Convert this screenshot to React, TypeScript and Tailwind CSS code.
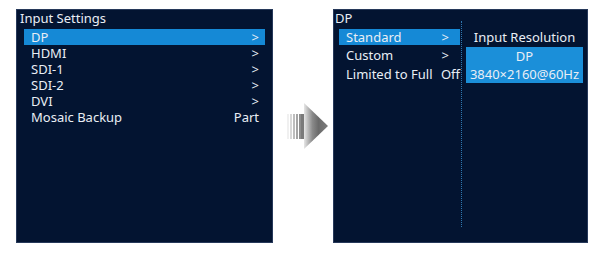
import React from "react";

const font = { fontFamily: '"Noto Sans", "Open Sans", sans-serif' };

function Arrow() {
  return (
    <svg width="42" height="46" viewBox="0 0 42 46" className="block">
      <defs>
        <linearGradient id="ag" x1="0" y1="0" x2="1" y2="0">
          <stop offset="0" stopColor="#e6e6e6" />
          <stop offset="0.35" stopColor="#8a8a8a" />
          <stop offset="0.6" stopColor="#6a6a6a" />
          <stop offset="1" stopColor="#7c7c7c" />
        </linearGradient>
      </defs>
      <rect x="0" y="11" width="2" height="25" fill="#f0f0f0" />
      <rect x="3" y="11" width="2" height="25" fill="#d8d8d8" />
      <rect x="6" y="11" width="2" height="25" fill="#bdbdbd" />
      <rect x="9" y="11" width="2" height="25" fill="#a4a4a4" />
      <rect x="12" y="11" width="2" height="25" fill="#8e8e8e" />
      <rect x="14" y="11" width="4" height="25" fill="#7a7a7a" />
      <polygon points="17,0 41,23 17,46" fill="url(#ag)" />
    </svg>
  );
}

function LeftRow({ label, value, active }: { label: string; value: string; active?: boolean }) {
  return (
    <div
      className={`mx-[7px] h-[16px] flex items-center justify-between pl-[7px] pr-[6px] text-[13px] leading-[16px] text-[#e9eef5] ${
        active ? "bg-[#1589d6]" : ""
      }`}
    >
      <span>{label}</span>
      <span>{value}</span>
    </div>
  );
}

export default function App() {
  return (
    <div className="w-[605px] h-[258px] bg-white" style={font}>
      <div className="flex items-center pt-[9px] pl-[16px]">
        {/* Left panel */}
        <div className="w-[257px] h-[234px] bg-[#031431] border border-[#27395a] flex flex-col">
          <div className="h-[19px] pl-[3px] text-[13px] leading-[17px] text-[#e9eef5]">Input Settings</div>
          <LeftRow label="DP" value=">" active />
          <LeftRow label="HDMI" value=">" />
          <LeftRow label="SDI-1" value=">" />
          <LeftRow label="SDI-2" value=">" />
          <LeftRow label="DVI" value=">" />
          <LeftRow label="Mosaic Backup" value="Part" />
        </div>

        {/* Arrow */}
        <div className="ml-[14px] mr-[4px]">
          <Arrow />
        </div>

        {/* Right panel */}
        <div className="w-[255px] h-[234px] bg-[#031431] border border-[#27395a] flex flex-col">
          <div className="h-[19px] pl-[1px] text-[13px] leading-[17px] text-[#e9eef5]">DP</div>
          <div className="flex flex-1">
            <div className="ml-[5px] w-[121px] flex flex-col text-[13px] leading-[16px] text-[#e9eef5]">
              <div className="h-[16px] flex items-center justify-between pl-[7px] pr-[11px] bg-[#1589d6]">
                <span>Standard</span>
                <span>&gt;</span>
              </div>
              <div className="h-[20px] flex items-center justify-between pl-[7px] pr-[11px]">
                <span>Custom</span>
                <span>&gt;</span>
              </div>
              <div className="h-[18px] flex items-center justify-between pl-[7px]">
                <span>Limited to Full</span>
                <span>Off</span>
              </div>
            </div>
            <div className="ml-[1px] -mt-[8px] mb-[15px] border-l border-dotted border-[#2f78b0]" />
            <div className="ml-[4px] w-[117px] flex flex-col text-[13px] text-[#e9eef5]">
              <div className="h-[18px] leading-[16px] text-center">Input Resolution</div>
              <div className="bg-[#1b8fd9] h-[36px] flex flex-col">
                <div className="h-[18px] leading-[18px] text-center">DP</div>
                <div className="h-[18px] leading-[18px] text-center">3840×2160@60Hz</div>
              </div>
            </div>
          </div>
        </div>
      </div>
    </div>
  );
}
